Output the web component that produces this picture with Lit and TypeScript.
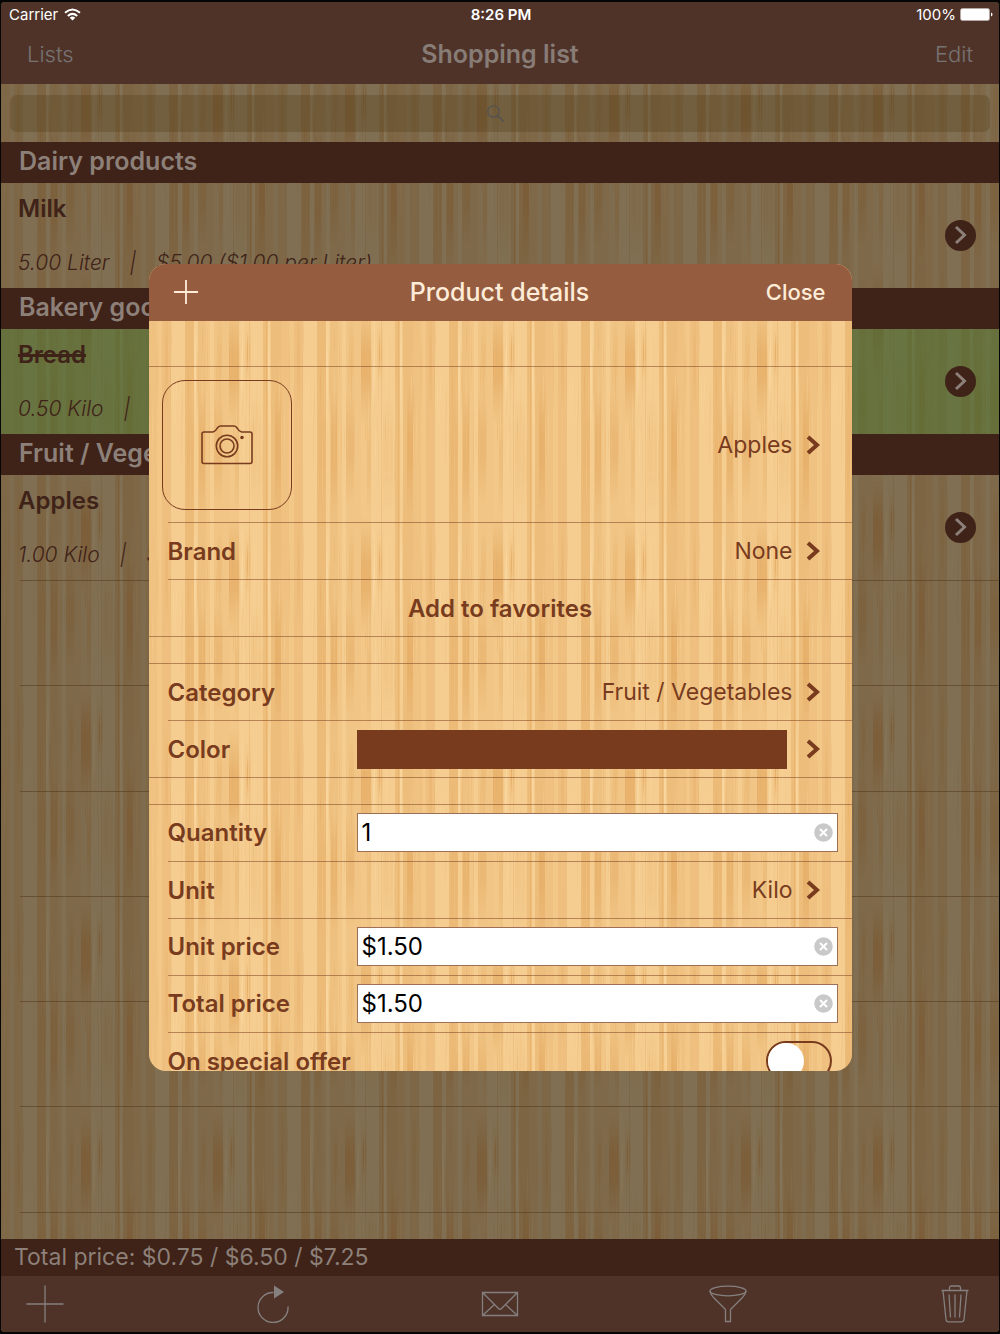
import { LitElement, html, css, svg, nothing, TemplateResult } from "lit";
import { customElement, property, state } from "lit/decorators.js";
import { classMap } from "lit/directives/class-map.js";

interface Item {
  name: string;
  amount: string;
  price: string;
  done?: boolean;
}

interface Section {
  title: string;
  items: Item[];
}

const SECTIONS: Section[] = [
  { title: "Dairy products", items: [{ name: "Milk", amount: "5.00 Liter", price: "$5.00 ($1.00 per Liter)" }] },
  { title: "Bakery goods", items: [{ name: "Bread", amount: "0.50 Kilo", price: "$0.75 ($1.50 per Kilo)", done: true }] },
  { title: "Fruit / Vegetables", items: [{ name: "Apples", amount: "1.00 Kilo", price: "$1.50 ($1.50 per Kilo)" }] },
];

/* Planks of one bamboo tile: x, y, width, height, strength. */
const TILE_W = 132;
const TILE_H = 211;
const PLANKS: number[][] = [
  [0, 0, 8, 211, 0.28], [8, 0, 5, 211, 0.16], [13, 0, 9, 211, 0.34], [16, 0, 3, 110, 0.25],
  [36, 0, 9, 211, 0.46], [38, 90, 6, 121, 0.2], [49, 0, 8, 211, 0.3], [50, 80, 6, 131, 0.5],
  [57, 0, 4, 211, 0.18], [65, 0, 15, 211, 0.2], [65, 80, 8, 120, 0.4], [68, 10, 5, 80, 0.25],
  [80, 0, 10, 211, 0.16], [80, 0, 10, 120, 0.6], [86, 90, 4, 121, 0.3], [96, 12, 6, 70, 0.2],
  [100, 0, 1, 211, 0.3], [102, 90, 10, 121, 0.18], [114, 0, 5, 211, 0.38], [117, 0, 1, 211, 0.45],
  [122, 0, 10, 211, 0.42], [126, 80, 6, 131, 0.5], [98, 25, 1, 45, 0.7],
];

/* Thin fibres, spread with a small fixed-seed generator. */
const FIBRES: number[][] = (() => {
  let seed = 7;
  const next = () => (seed = (seed * 16807) % 2147483647) / 2147483647;
  return Array.from({ length: 70 }, () => [
    Math.floor(next() * TILE_W),
    Math.floor(next() * 120),
    30 + Math.floor(next() * 60),
    0.1 + next() * 0.2,
    next() > 0.6 ? 1 : 0,
  ]);
})();

@customElement("wood-grain")
class WoodGrain extends LitElement {
  @property({ type: Number }) shift = 0;

  static styles = css`
    :host { display: block; background: var(--wood-base); }
    svg { display: block; width: 100%; height: 100%; }
    .plank { fill: var(--wood-streak); }
    .glint { fill: var(--wood-glint); }
    .streak-stop { stop-color: var(--wood-streak); }
    .glint-stop { stop-color: var(--wood-glint); }
  `;

  private fade(id: string, cls: string) {
    return svg`<linearGradient id=${id} x1="0" y1="0" x2="0" y2="1">
      <stop class=${cls} offset="0" stop-opacity="0" />
      <stop class=${cls} offset="0.4" stop-opacity="1" />
      <stop class=${cls} offset="0.6" stop-opacity="1" />
      <stop class=${cls} offset="1" stop-opacity="0" />
    </linearGradient>`;
  }

  render() {
    return html`<svg aria-hidden="true">
      <defs>
        ${this.fade("streak-fade", "streak-stop")} ${this.fade("glint-fade", "glint-stop")}
        <pattern id="tile" width=${TILE_W} height=${TILE_H} y=${this.shift} patternUnits="userSpaceOnUse">
          ${PLANKS.map(([x, y, w, h, o]) =>
            h === TILE_H
              ? svg`<rect class="plank" x=${x} y=${y} width=${w} height=${h} opacity=${o} />`
              : svg`<rect fill="url(#streak-fade)" x=${x} y=${y} width=${w} height=${h} opacity=${o} />`
          )}
          ${FIBRES.map(([x, y, h, o, g]) => svg`<rect fill=${g ? "url(#glint-fade)" : "url(#streak-fade)"} x=${x} y=${y} width="1" height=${h} opacity=${o} />`)}
          ${[45, 92, 119].map((x) => svg`<rect fill="url(#glint-fade)" x=${x} y="0" width="2" height="130" opacity="0.6" />`)}
        </pattern>
      </defs>
      <rect width="100%" height="100%" fill="url(#tile)" />
    </svg>`;
  }
}

const chevron = html`<svg class="chevron" width="14" height="20" viewBox="0 0 14 20" aria-hidden="true">
  <path d="M2 2 L11 10 L2 18" fill="none" stroke="currentColor" stroke-width="4" />
</svg>`;

const icon = (label: string, body: TemplateResult) => html`<button class="tool" aria-label=${label}>
  <svg width="38" height="38" viewBox="0 0 38 38" fill="none" stroke="currentColor" stroke-width="1.3">${body}</svg>
</button>`;

@customElement("app-root")
class AppRoot extends LitElement {
  @state() private quantity = "1";
  @state() private unitPrice = "$1.50";
  @state() private totalPrice = "$1.50";

  static styles = css`
    :host {
      display: block;
      font-family: Inter, "Liberation Sans", sans-serif;
      --brown: #783b1e;
      --line: rgba(120, 59, 30, 0.5);
    }
    * { box-sizing: border-box; }
    button, input { font: inherit; color: inherit; background: none; border: 0; padding: 0; margin: 0; border-radius: 0; }
    button { cursor: pointer; }
    h1, h2, h3, p, ul { margin: 0; padding: 0; font-weight: inherit; list-style: none; }
    svg { display: block; flex: none; }
    a { color: inherit; text-decoration: none; }

    .screen {
      position: relative;
      min-height: 100vh;
      background: #050505;
      padding: 2px 1px;
      display: flex;
    }
    .page {
      flex: 1;
      display: flex;
      flex-direction: column;
      position: relative;
      isolation: isolate;
      border-radius: 4px;
      overflow: hidden;
      color: #3f2218;
      --wood-base: #806f52;
      --wood-streak: #7a572f;
      --wood-glint: #89775a;
    }
    .backdrop { position: absolute; inset: 0; z-index: -1; }

    .top { background: #4f3329; height: 82px; display: flex; flex-direction: column; }
    .status {
      display: grid;
      grid-template-columns: 1fr auto 1fr;
      align-items: center;
      height: 25px;
      padding: 0 6px 0 8px;
      font-size: 15px;
      color: #fff;
    }
    .status-side { display: flex; align-items: center; gap: 6px; }
    .status-end { justify-content: flex-end; gap: 4px; }
    .clock { font-weight: 600; }
    .nav {
      flex: 1;
      display: grid;
      grid-template-columns: 1fr auto 1fr;
      align-items: center;
      padding: 0 26px 3px;
      font-size: 22px;
      font-weight: 300;
      color: #777372;
    }
    .nav-end { justify-self: end; }
    .nav-title { font-size: 25px; font-weight: 600; color: #877c76; }

    .search { padding: 11px 9px 10px; }
    .search-box { display: block; position: relative; height: 37px; border-radius: 7px; background: rgba(83, 61, 24, 0.32); }
    .search-box input { width: 100%; height: 100%; padding: 0 12px; font-size: 18px; outline: 0; }
    .search-icon { position: absolute; left: 50%; top: 10px; margin-left: -13px; color: #555250; pointer-events: none; }

    .section-title {
      height: 41px;
      line-height: 38px;
      padding-left: 18px;
      background: #3f2218;
      color: #8c8079;
      font-size: 25px;
      font-weight: 600;
    }
    .item { height: 105px; display: flex; align-items: center; justify-content: space-between; padding: 0 23px 1px 17px; }
    .item.done { background: rgba(80, 122, 50, 0.5); }
    .item-text { display: flex; flex-direction: column; gap: 25px; }
    .item-name { font-size: 24px; line-height: 30px; font-weight: 600; }
    .done .item-name { text-decoration: line-through; text-decoration-thickness: 3px; }
    .item-info { font-size: 21px; line-height: 28px; font-weight: 300; font-style: italic; display: flex; gap: 20px; white-space: nowrap; }
    .round {
      width: 31px;
      height: 31px;
      border-radius: 50%;
      background: #3f2218;
      color: #8c8079;
      display: grid;
      place-items: center;
    }
    .blank { flex: 1; display: grid; grid-template-rows: repeat(6, 4fr) 1fr; margin-left: 19px; border-top: 1px solid rgba(80, 50, 25, 0.5); }
    .blank div { border-bottom: 1px solid rgba(80, 50, 25, 0.5); }
    .blank div:last-child { border: 0; }

    .total { height: 37px; line-height: 37px; padding-left: 13px; background: #3f2218; color: #8c8079; font-size: 23px; }
    .toolbar { height: 56px; padding: 0 25px; background: #4f3329; color: #85807f; display: flex; align-items: center; justify-content: space-between; }

    .overlay { position: absolute; inset: 0; display: grid; place-items: center; }
    .sheet {
      width: 100%;
      max-width: 703px;
      height: 807px;
      border-radius: 17px;
      overflow: hidden;
      position: relative;
      isolation: isolate;
      display: flex;
      flex-direction: column;
      color: var(--brown);
      font-size: 24px;
      --wood-base: #f5cd90;
      --wood-streak: #e2a65c;
      --wood-glint: #fbdba6;
    }
    .sheet-top {
      flex: none;
      height: 57px;
      display: grid;
      grid-template-columns: 1fr auto 1fr;
      align-items: center;
      padding: 0 26px 0 25px;
      background: #965c40;
      color: #feecd9;
    }
    .sheet-title { font-size: 25px; font-weight: 500; }
    .close { justify-self: end; font-size: 22px; font-weight: 500; }
    .sheet-body { flex: 1; min-height: 0; overflow: hidden; padding-top: 45px; display: flex; flex-direction: column; gap: 26px; }
    .group { flex: none; border-top: 1px solid var(--line); }
    .row {
      height: 57px;
      display: grid;
      grid-template-columns: 189px 1fr;
      align-items: center;
      padding-left: 19px;
      padding-right: 32px;
      width: 100%;
      text-align: left;
      background: linear-gradient(var(--line), var(--line)) right bottom / calc(100% - 19px) 1px no-repeat;
    }
    .row:last-child { background-size: 100% 1px; }
    .row.product { height: 156px; padding-left: 13px; }
    .row.field { padding-right: 14px; padding-bottom: 1px; }
    .row.toggle { padding-right: 20px; }
    .row.center { display: block; padding: 0; text-align: center; font-weight: 600; }
    .label { font-weight: 600; white-space: nowrap; }
    .value { display: flex; align-items: center; justify-content: flex-end; gap: 13px; font-size: 23px; }
    .swatch { flex: 1; height: 39px; background: var(--brown); margin-right: 6px; }
    .photo { width: 130px; height: 130px; border: 1px solid var(--brown); border-radius: 23px; display: grid; place-items: center; }
    .entry { height: 39px; display: flex; align-items: center; background: #fff; border: 1px solid #9c6f56; padding: 0 4px; }
    .entry input { flex: 1; min-width: 0; height: 36px; color: #000; outline: 0; }
    .switch {
      appearance: none;
      justify-self: end;
      width: 66px;
      height: 40px;
      border: 2px solid var(--brown);
      border-radius: 20px;
      display: flex;
      cursor: pointer;
    }
    .switch::before { content: ""; width: 36px; height: 36px; border-radius: 50%; background: #fff; }
    .switch:checked { background: var(--brown); justify-content: flex-end; }
  `;

  private renderItem(item: Item) {
    return html`<li class=${classMap({ item: true, done: !!item.done })}>
      <div class="item-text">
        <h3 class="item-name">${item.name}</h3>
        <p class="item-info"><span>${item.amount}</span><span>|</span><span>${item.price}</span></p>
      </div>
      <button class="round" aria-label="Details of ${item.name}">
        <svg width="13" height="20" viewBox="0 0 13 20" aria-hidden="true">
          <path d="M2 2 L10.5 10 L2 18" fill="none" stroke="currentColor" stroke-width="3" />
        </svg>
      </button>
    </li>`;
  }

  private renderLink(label: string, value: string | typeof nothing) {
    return html`<button class="row">
      <span class="label">${label}</span>
      <span class="value">${value === nothing ? html`<span class="swatch"></span>` : html`<span>${value}</span>`}${chevron}</span>
    </button>`;
  }

  private renderField(id: string, label: string, value: string, set: (v: string) => void) {
    return html`<div class="row field">
      <label class="label" for=${id}>${label}</label>
      <div class="entry">
        <input id=${id} type="text" .value=${value} @input=${(e: Event) => set((e.target as HTMLInputElement).value)} />
        <button aria-label="Clear ${label}" @click=${() => set("")}>
          <svg width="19" height="19" viewBox="0 0 19 19" aria-hidden="true">
            <circle cx="9.5" cy="9.5" r="9.3" fill="#c9c9c9" />
            <path d="M6 6 L13 13 M13 6 L6 13" stroke="#fff" stroke-width="2" />
          </svg>
        </button>
      </div>
    </div>`;
  }

  private renderToolbar() {
    return html`<footer class="toolbar">
      ${icon("Add", svg`<path d="M19 0.5V37.5M0.5 19H37.5" />` as TemplateResult)}
      ${icon("Reload", svg`<path d="M19.5 7.5 A15 15 0 1 0 34 21.5" /><path d="M20 0.5 L30 7 L20 13.5 Z" fill="currentColor" stroke="none" />` as TemplateResult)}
      ${icon("Mail", svg`<path d="M1.5 7.5H36.5V30.5H1.5Z M1.5 7.5 L17.5 23.5 Q19 25 20.5 23.5 L36.5 7.5 M1.5 30.5 L13.5 19.5 M36.5 30.5 L24.5 19.5" />` as TemplateResult)}
      ${icon("Filter", svg`<ellipse cx="19" cy="6" rx="18" ry="4.8" /><path d="M1 6 C1.5 10 4 12 7 15 L16.5 24.5 V36.5 H21.5 V24.5 L31 15 C34 12 36.5 10 37 6" />` as TemplateResult)}
      ${icon("Delete", svg`<path d="M5.5 5.5H32.5 M7 5.5 L10 34.5 Q10.3 36.8 12.5 36.8 H25.5 Q27.7 36.8 28 34.5 L31 5.5 M13.5 5 V3 Q13.5 1 15.5 1 H22.5 Q24.5 1 24.5 3 V5 M13 9.5 L14.5 32.5 M19 9.5 V32.5 M25 9.5 L23.5 32.5" />` as TemplateResult)}
    </footer>`;
  }

  private renderSheet() {
    return html`<section class="sheet" role="dialog" aria-labelledby="sheet-title">
      <wood-grain class="backdrop" .shift=${41}></wood-grain>
      <header class="sheet-top">
        <button aria-label="Add product">
          <svg width="24" height="24" viewBox="0 0 24 24"><path d="M12 0V24M0 12H24" stroke="currentColor" stroke-width="1.8" /></svg>
        </button>
        <h2 class="sheet-title" id="sheet-title">Product details</h2>
        <button class="close">Close</button>
      </header>
      <div class="sheet-body">
        <div class="group">
          <div class="row product">
            <button class="photo" aria-label="Take photo">
              <svg width="52" height="40" viewBox="0 0 52 40" fill="none" stroke="currentColor" stroke-width="1.6">
                <path d="M3 7 H12 Q14.5 6.5 16 3.5 Q17.5 1 19.5 1 H33 Q35 1 36.5 3.5 Q38 6.5 40.5 7 H49 Q51 7 51 9 V36.5 Q51 38.5 49 38.5 H3 Q1 38.5 1 36.5 V9 Q1 7 3 7 Z" />
                <circle cx="26" cy="21" r="10.7" />
                <circle cx="26" cy="21" r="7" />
                <circle cx="41" cy="12.5" r="1.8" fill="currentColor" stroke="none" />
              </svg>
            </button>
            <button class="value"><span>Apples</span>${chevron}</button>
          </div>
          ${this.renderLink("Brand", "None")}
          <button class="row center">Add to favorites</button>
        </div>
        <div class="group">${this.renderLink("Category", "Fruit / Vegetables")} ${this.renderLink("Color", nothing)}</div>
        <div class="group">
          ${this.renderField("quantity", "Quantity", this.quantity, (v) => (this.quantity = v))}
          ${this.renderLink("Unit", "Kilo")}
          ${this.renderField("unit-price", "Unit price", this.unitPrice, (v) => (this.unitPrice = v))}
          ${this.renderField("total-price", "Total price", this.totalPrice, (v) => (this.totalPrice = v))}
          <div class="row toggle">
            <label class="label" for="offer">On special offer</label>
            <input class="switch" id="offer" type="checkbox" role="switch" />
          </div>
        </div>
      </div>
    </section>`;
  }

  render() {
    return html`<div class="screen">
      <main class="page">
        <wood-grain class="backdrop" .shift=${50}></wood-grain>
        <header class="top">
          <div class="status">
            <div class="status-side">
              <span>Carrier</span>
              <svg width="17" height="13" viewBox="0 0 17 13" fill="none" stroke="#fff" stroke-width="2" aria-hidden="true">
                <path d="M1 4.8 Q8.5 -1.8 16 4.8" /><path d="M3.8 8 Q8.5 3.8 13.2 8" />
                <path d="M8.5 12.6 L5.7 9.7 Q8.5 7.3 11.3 9.7 Z" fill="#fff" stroke="none" />
              </svg>
            </div>
            <span class="clock">8:26 PM</span>
            <div class="status-side status-end">
              <span>100%</span>
              <svg width="33" height="13" viewBox="0 0 33 13" aria-hidden="true">
                <rect x="0.5" y="0.5" width="29" height="12" rx="2" fill="#fff" stroke="#b5a8a3" />
                <path d="M31 4.5 Q32.5 5 32.5 6.5 Q32.5 8 31 8.5 Z" fill="#fff" />
              </svg>
            </div>
          </div>
          <nav class="nav">
            <a href="#lists">Lists</a>
            <h1 class="nav-title">Shopping list</h1>
            <button class="nav-end">Edit</button>
          </nav>
        </header>
        <div class="search">
          <label class="search-box">
            <input type="search" aria-label="Search" />
            <svg class="search-icon" width="17" height="17" viewBox="0 0 17 17" fill="none" stroke="currentColor" aria-hidden="true">
              <circle cx="6.5" cy="6.5" r="5.7" stroke-width="1.3" /><path d="M10.5 10.5 L16.5 16.5" stroke-width="1.7" />
            </svg>
          </label>
        </div>
        ${SECTIONS.map((s) => html`<section><h2 class="section-title">${s.title}</h2><ul>${s.items.map((i) => this.renderItem(i))}</ul></section>`)}
        <div class="blank">${Array.from({ length: 7 }, () => html`<div></div>`)}</div>
        <p class="total">Total price: $0.75 / $6.50 / $7.25</p>
        ${this.renderToolbar()}
      </main>
      <div class="overlay">${this.renderSheet()}</div>
    </div>`;
  }
}
